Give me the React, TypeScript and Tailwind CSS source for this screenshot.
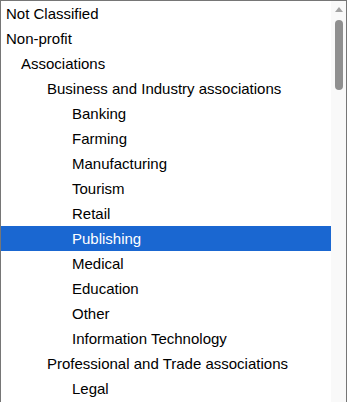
import React from "react";

type Item = { label: string; level: number; selected?: boolean };

const items: Item[] = [
  { label: "Not Classified", level: 0 },
  { label: "Non-profit", level: 0 },
  { label: "Associations", level: 1 },
  { label: "Business and Industry associations", level: 2 },
  { label: "Banking", level: 3 },
  { label: "Farming", level: 3 },
  { label: "Manufacturing", level: 3 },
  { label: "Tourism", level: 3 },
  { label: "Retail", level: 3 },
  { label: "Publishing", level: 3, selected: true },
  { label: "Medical", level: 3 },
  { label: "Education", level: 3 },
  { label: "Other", level: 3 },
  { label: "Information Technology", level: 3 },
  { label: "Professional and Trade associations", level: 2 },
  { label: "Legal", level: 3 },
];

const indent = ["pl-[5px]", "pl-[20px]", "pl-[46px]", "pl-[71px]"];

export default function App() {
  return (
    <div
      className="w-[347px] h-[402px] overflow-hidden border-l border-t border-r border-[#767676] bg-white flex"
      style={{ fontFamily: '"Liberation Sans", Arial, sans-serif' }}
    >
      <ul className="flex-1 flex flex-col">
        {items.map((it) => (
          <li
            key={it.label}
            className={`h-[25px] shrink-0 flex items-center text-[15px] leading-none ${indent[it.level]} ${
              it.selected ? "bg-[#1a67d1] text-white" : "text-black"
            }`}
          >
            {it.label}
          </li>
        ))}
      </ul>
      <div className="w-[15px] bg-[#f9f9f9] flex flex-col items-center pt-[6px]">
        <div className="w-0 h-0 border-l-[4px] border-r-[4px] border-b-[5px] border-l-transparent border-r-transparent border-b-[#a3a3a3]" />
        <div className="mt-[8px] w-[8px] h-[70px] rounded-full bg-[#8f8f8f]" />
      </div>
    </div>
  );
}
